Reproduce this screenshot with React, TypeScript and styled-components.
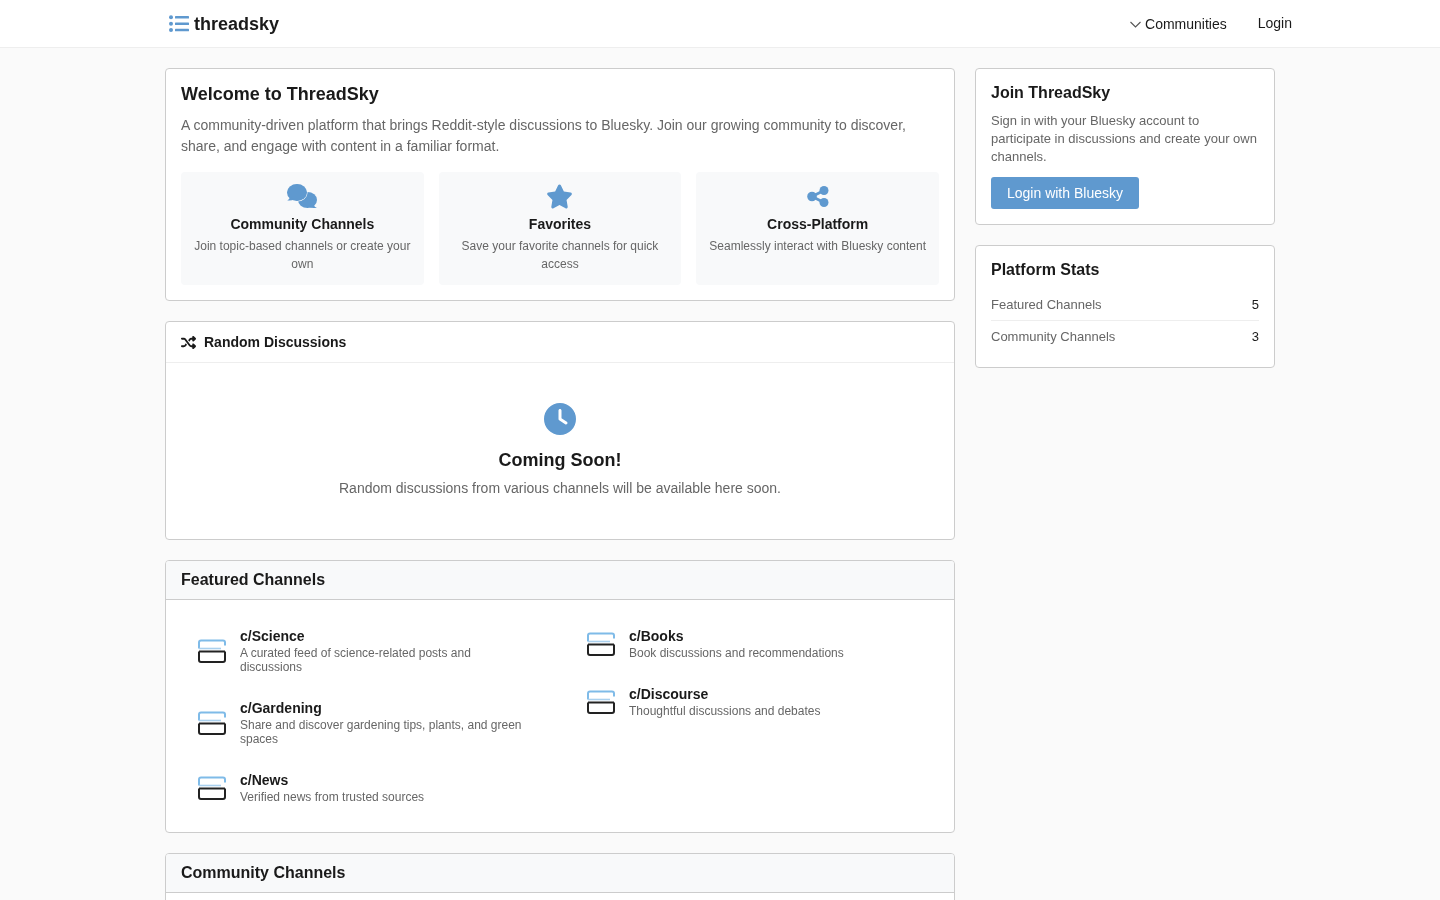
import React from "react";
import styled, { createGlobalStyle } from "styled-components";
import { FaStar, FaShuffle, FaClock } from "react-icons/fa6";

const Global = createGlobalStyle`
  html, body { margin: 0; padding: 0; height: 900px; overflow: hidden; }
  body { background: #fafafa; color: #1a1a1a; font-family: "Liberation Sans", Arial, sans-serif; }
  * { box-sizing: border-box; }
  h1, h2, h3, h4, p { margin: 0; }
`;

const Root = styled.div`will-change: transform;`;
const Navbar = styled.header`
  height: 48px; background: #fff; border-bottom: 1px solid #eee;
  display: flex; align-items: center; justify-content: space-between;
  padding: 0 148px 0 169px;
`;
const Logo = styled.div`
  display: flex; align-items: center; gap: 5px; font-size: 18px; font-weight: 700; padding-top: 1px;
  svg { margin-top: -1px; }
`;
const NavRight = styled.nav`display: flex; align-items: center; gap: 31px; font-size: 14px;`;
const Communities = styled.span`display: flex; align-items: center; gap: 4px; padding-top: 1px;`;
const Login = styled.span`position: relative; top: -1px;`;

const Page = styled.main`
  width: 1110px; margin: 20px auto 0; display: grid; grid-template-columns: 790px 300px; gap: 20px; align-items: start;
`;
const Column = styled.div`display: flex; flex-direction: column; gap: 20px;`;
const Card = styled.section`
  background: #fff; border: 1px solid #ccc; border-radius: 4px; overflow: hidden;
`;
const Welcome = styled(Card)`padding: 15px; height: 233px;`;
const WelcomeTitle = styled.h1`font-size: 18px; line-height: 20px; font-weight: 700; margin-bottom: 11px;`;
const Lead = styled.p`font-size: 14px; line-height: 21px; color: #666; margin-bottom: 15px;`;
const Features = styled.div`display: grid; grid-template-columns: repeat(3, 1fr); gap: 15px;`;
const Feature = styled.div`
  background: #f8f9fa; border-radius: 4px; height: 113px; padding: 10px; text-align: center;
  svg { color: #5f99cf; display: block; margin: 0 auto; }
`;
const FeatureIcon = styled.div`height: 28px; display: flex; align-items: center; justify-content: center;`;
const FeatureTitle = styled.h3`font-size: 14px; line-height: 17px; font-weight: 700; margin: 6px 0 4px;`;
const FeatureText = styled.p`font-size: 12px; line-height: 18px; color: #666;`;

const RandomCard = styled(Card)`height: 219px;`;
const RandomHead = styled.div`
  height: 41px; border-bottom: 1px solid #eee; display: flex; align-items: center; gap: 8px; padding: 0 15px;
  font-size: 14px; font-weight: 700;
  svg { width: 15px; height: 15px; }
`;
const Soon = styled.div`
  display: flex; flex-direction: column; align-items: center; padding-top: 40px; text-align: center;
  svg { color: #5f99cf; width: 32px; height: 32px; }
`;
const SoonTitle = styled.h2`font-size: 18px; line-height: 22px; font-weight: 700; margin: 14px 0 7px;`;
const SoonText = styled.p`font-size: 14px; line-height: 20px; color: #666;`;

const HeadBar = styled.div`
  height: 39px; background: #f8f9fa; border-bottom: 1px solid #ccc; padding: 0 15px;
  display: flex; align-items: center; font-size: 16px; font-weight: 700;
`;
const ChannelGrid = styled.div`
  display: grid; grid-template-columns: 1fr 1fr; gap: 0 20px; padding: 15px;
`;
const ChannelCol = styled.div`display: flex; flex-direction: column;`;
const Channel = styled.div`display: flex; align-items: center; gap: 14px; padding: 13px 28px 13px 15px;`;
const ChannelBody = styled.div`min-width: 0;`;
const ChannelName = styled.h4`font-size: 14px; line-height: 17px; font-weight: 700; margin-bottom: 1px;`;
const ChannelDesc = styled.p`font-size: 12px; line-height: 14px; color: #666;`;

const Side = styled(Card)`padding: 15px;`;
const SideTitle = styled.h2`font-size: 16px; line-height: 18px; font-weight: 700;`;
const SideText = styled.p`font-size: 13px; line-height: 18px; color: #666; margin: 10px 0 11px;`;
const Button = styled.button`
  display: block; height: 32px; padding: 0 16px; border: 0; border-radius: 3px; background: #5f99cf; color: #fff;
  font: 14px "Liberation Sans", Arial, sans-serif;
`;
const StatList = styled.div`margin-top: 9px;`;
const Stat = styled.div`
  display: flex; justify-content: space-between; align-items: center; height: 32px; font-size: 13px; color: #666;
  & + & { border-top: 1px solid #eee; }
  b { font-weight: 400; color: #1a1a1a; }
`;
const Tall = styled(Card)`min-height: 100px;`;

const LogoIcon = () => (
  <svg width="20" height="18" viewBox="0 0 20 18" fill="#5f99cf">
    <circle cx="2" cy="2.2" r="2" />
    <circle cx="2" cy="8.7" r="2" />
    <circle cx="2" cy="15" r="2" />
    <rect x="6" y="1" width="14" height="2.6" rx=".6" />
    <rect x="6" y="7.4" width="14" height="2.6" rx=".6" />
    <rect x="6" y="13.7" width="14" height="2.6" rx=".6" />
  </svg>
);

const Chevron = () => (
  <svg width="11" height="7" viewBox="0 0 11 7" fill="none" stroke="#555" strokeWidth="1.1">
    <path d="M.5 1 5.5 6 10.5 1" />
  </svg>
);

const CommentsIcon = () => (
  <svg width="30" height="24" viewBox="0 0 30 24" fill="#5f99cf">
    <ellipse cx="20.5" cy="16" rx="9.5" ry="8" />
    <path d="M26 20.5Q27.5 23 30 23.7Q25 24.5 22 23Z" />
    <ellipse cx="10" cy="8.5" rx="10" ry="8.5" stroke="#f8f9fa" strokeWidth="1.2" />
    <ellipse cx="10" cy="8.5" rx="10" ry="8.5" />
    <path d="M3 13Q2.5 15.5 .3 16.4Q4 17 7.5 15.5Z" />
  </svg>
);

const ShareIcon = () => (
  <svg width="22" height="21" viewBox="0 0 22 21" fill="#5f99cf">
    <circle cx="5" cy="10.5" r="4.8" />
    <circle cx="17" cy="4.5" r="4.5" />
    <circle cx="17" cy="16.5" r="4.5" />
    <path d="M5 10.5 17 4.5M5 10.5 17 16.5" stroke="#5f99cf" strokeWidth="2.8" />
  </svg>
);

const ChannelIcon = () => (
  <svg width="30" height="24" viewBox="0 0 30 24" fill="none" style={{ flex: "none" }}>
    <path d="M3 9.5V3.5Q3 1.5 5 1.5H27Q29 1.5 29 3.5V6.5" stroke="#7fbbe8" strokeWidth="2" />
    <path d="M3 9.5H25" stroke="#a9d0ee" strokeWidth="1.6" />
    <path d="M3 12.5H29M3 12.5V21Q3 23 5 23H27Q29 23 29 21V12.5" stroke="#222" strokeWidth="2" />
  </svg>
);

const left = [
  ["c/Science", "A curated feed of science-related posts and discussions"],
  ["c/Gardening", "Share and discover gardening tips, plants, and green spaces"],
  ["c/News", "Verified news from trusted sources"],
];
const right = [
  ["c/Books", "Book discussions and recommendations"],
  ["c/Discourse", "Thoughtful discussions and debates"],
];

const renderChannels = (rows: string[][]) => rows.map(([n, d]) => (
  <Channel key={n}>
    <ChannelIcon />
    <ChannelBody>
      <ChannelName>{n}</ChannelName>
      <ChannelDesc>{d}</ChannelDesc>
    </ChannelBody>
  </Channel>
));

export default function App() {
  return (
    <Root>
      <Global />
      <Navbar>
        <Logo><LogoIcon />threadsky</Logo>
        <NavRight>
          <Communities><Chevron />Communities</Communities>
          <Login>Login</Login>
        </NavRight>
      </Navbar>
      <Page>
        <Column>
          <Welcome>
            <WelcomeTitle>Welcome to ThreadSky</WelcomeTitle>
            <Lead>A community-driven platform that brings Reddit-style discussions to Bluesky. Join our growing community to discover, share, and engage with content in a familiar format.</Lead>
            <Features>
              <Feature>
                <FeatureIcon><CommentsIcon /></FeatureIcon>
                <FeatureTitle>Community Channels</FeatureTitle>
                <FeatureText>Join topic-based channels or create your own</FeatureText>
              </Feature>
              <Feature>
                <FeatureIcon><FaStar size={27} /></FeatureIcon>
                <FeatureTitle>Favorites</FeatureTitle>
                <FeatureText>Save your favorite channels for quick access</FeatureText>
              </Feature>
              <Feature>
                <FeatureIcon><ShareIcon /></FeatureIcon>
                <FeatureTitle>Cross-Platform</FeatureTitle>
                <FeatureText>Seamlessly interact with Bluesky content</FeatureText>
              </Feature>
            </Features>
          </Welcome>
          <RandomCard>
            <RandomHead><FaShuffle />Random Discussions</RandomHead>
            <Soon>
              <FaClock />
              <SoonTitle>Coming Soon!</SoonTitle>
              <SoonText>Random discussions from various channels will be available here soon.</SoonText>
            </Soon>
          </RandomCard>
          <Card>
            <HeadBar>Featured Channels</HeadBar>
            <ChannelGrid>
              <ChannelCol>{renderChannels(left)}</ChannelCol>
              <ChannelCol>{renderChannels(right)}</ChannelCol>
            </ChannelGrid>
          </Card>
          <Tall>
            <HeadBar>Community Channels</HeadBar>
          </Tall>
        </Column>
        <Column>
          <Side>
            <SideTitle>Join ThreadSky</SideTitle>
            <SideText>Sign in with your Bluesky account to participate in discussions and create your own channels.</SideText>
            <Button>Login with Bluesky</Button>
          </Side>
          <Side>
            <SideTitle>Platform Stats</SideTitle>
            <StatList>
              <Stat>Featured Channels<b>5</b></Stat>
              <Stat>Community Channels<b>3</b></Stat>
            </StatList>
          </Side>
        </Column>
      </Page>
    </Root>
  );
}
